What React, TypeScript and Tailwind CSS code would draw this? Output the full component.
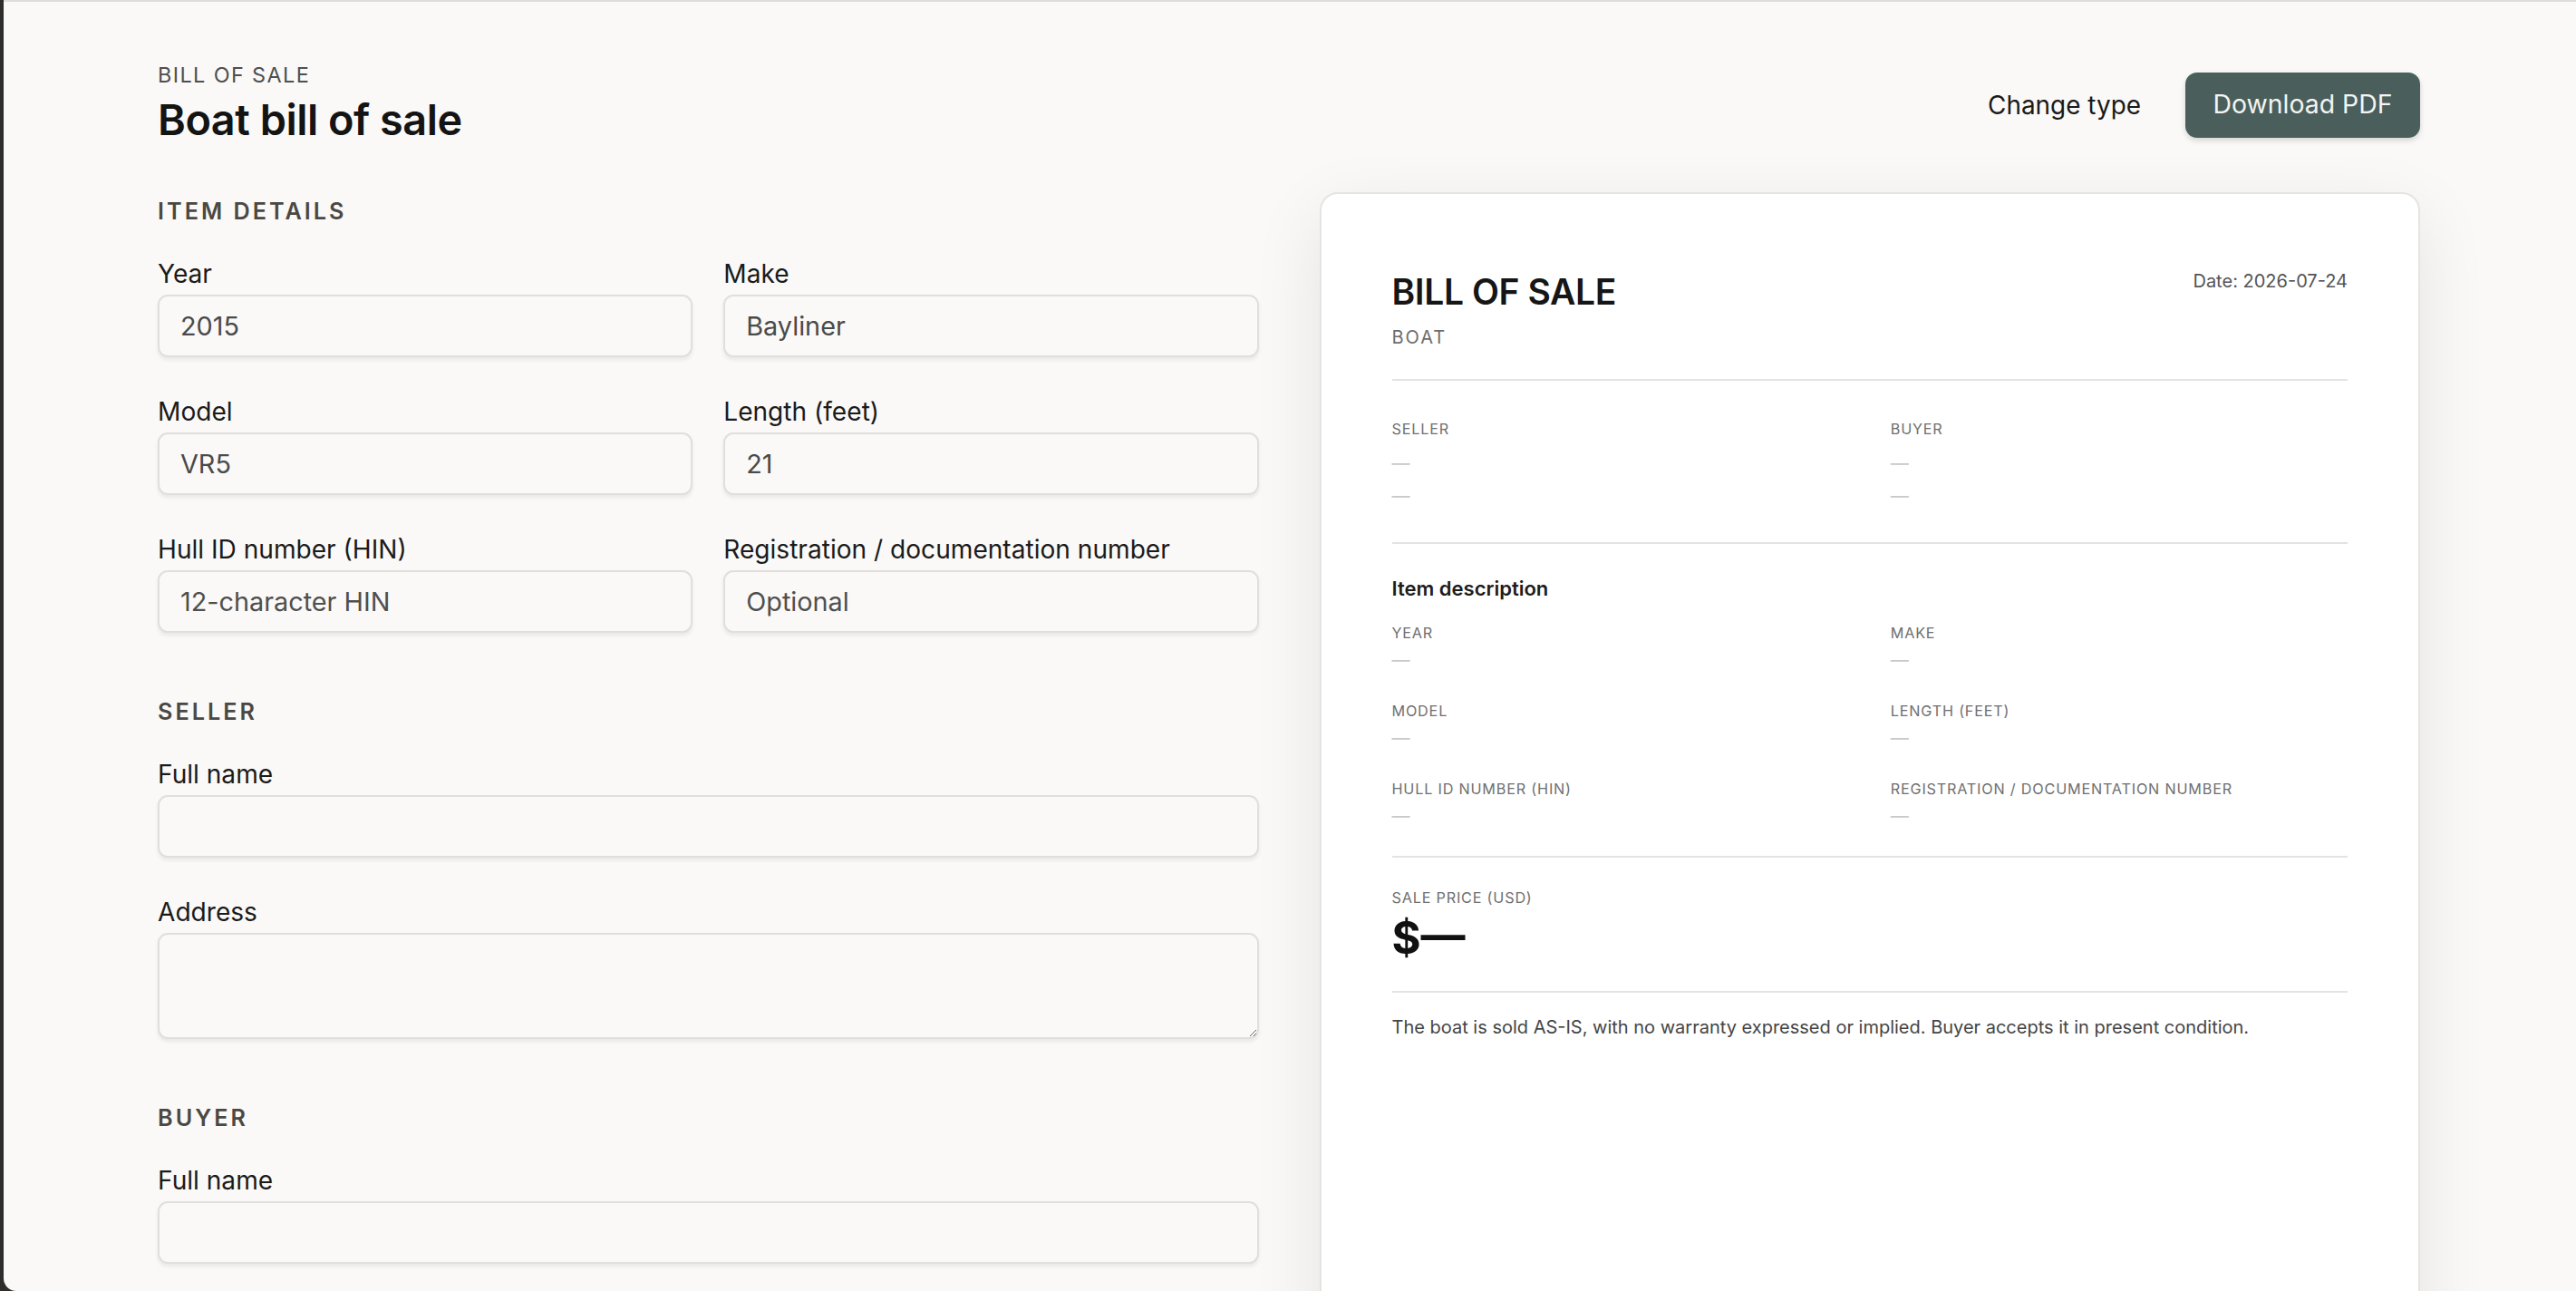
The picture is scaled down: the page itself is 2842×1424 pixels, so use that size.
import React from "react";

type FieldProps = {
  label: string;
  value?: string;
  placeholder?: string;
  textarea?: boolean;
};

const Field = ({ label, value, placeholder, textarea }: FieldProps) => {
  const box =
    "w-full rounded-[11px] border-2 border-[#e1dfdc] bg-[#faf9f7] px-[23px] text-[28.8px] text-[#4a4a4a] placeholder:text-[#4f4f4f] shadow-[0_3px_4px_rgba(0,0,0,0.07)] outline-none";
  return (
    <label className="flex flex-col">
      <span className="text-[28.1px] leading-[34px] text-[#1b1b1b]">{label}</span>
      {textarea ? (
        <textarea className={`${box} mt-[6px] h-[117px] py-[14px]`} defaultValue={value} placeholder={placeholder} />
      ) : (
        <input className={`${box} mt-[6px] h-[69px]`} defaultValue={value} placeholder={placeholder} />
      )}
    </label>
  );
};

const Section = ({ title, children, first }: { title: string; children: React.ReactNode; first?: boolean }) => (
  <section className={first ? "" : "mt-[70px]"}>
    <h2 className="text-[25.2px] leading-[34px] font-semibold uppercase tracking-[0.12em] text-[#4b4843]">{title}</h2>
    <div className="mt-[35px]">{children}</div>
  </section>
);

const SmallLabel = ({ children }: { children: React.ReactNode }) => (
  <div className="text-[16.2px] leading-[22px] uppercase tracking-[0.05em] text-[#6f6f6f]">{children}</div>
);

const Dash = ({ tall }: { tall?: boolean }) => (
  <div className={tall ? "text-[20px] leading-[36px] text-[#c9c9c9]" : "text-[20px] leading-[30px] text-[#c9c9c9]"}>—</div>
);

const Divider = () => <div className="h-[2px] bg-[#e3e3e3]" />;

const Preview = () => {
  const items = [
    ["Year", "Make"],
    ["Model", "Length (feet)"],
    ["Hull ID number (HIN)", "Registration / documentation number"],
  ];
  return (
    <div className="aspect-[8.5/11] rounded-[20px] border-2 border-[#e6e4e1] bg-white pl-[78px] pr-[78px] pt-[86px] shadow-[0_24px_80px_rgba(0,0,0,0.09)]">
      <div className="flex items-start justify-between">
        <div>
          <div className="text-[39px] leading-[44px] font-semibold tracking-[-0.01em] text-[#161616]">BILL OF SALE</div>
          <div className="mt-[14px] text-[20px] leading-[28px] tracking-[0.1em] text-[#6d6d6d]">BOAT</div>
        </div>
        <div className="text-[20px] leading-[20px] text-[#555]">Date: 2026-07-24</div>
      </div>
      <div className="mt-[32px]">
        <Divider />
      </div>
      <div className="grid grid-cols-2 gap-x-[46px] pt-[42px]">
        {["Seller", "Buyer"].map((p) => (
          <div key={p}>
            <SmallLabel>{p}</SmallLabel>
            <div className="mt-[9px]">
              <Dash tall />
              <Dash tall />
            </div>
          </div>
        ))}
      </div>
      <div className="mt-[33px]">
        <Divider />
      </div>
      <div className="pt-[33px]">
        <div className="text-[22px] leading-[32px] font-semibold text-[#1d1d1d]">Item description</div>
        <div className="mt-[22px] grid grid-cols-2 gap-x-[46px] gap-y-[30px]">
          {items.flat().map((t) => (
            <div key={t}>
              <SmallLabel>{t}</SmallLabel>
              <div className="mt-[4px]">
                <Dash />
              </div>
            </div>
          ))}
        </div>
      </div>
      <div className="mt-[29px]">
        <Divider />
      </div>
      <div className="pt-[33px]">
        <SmallLabel>Sale price (USD)</SmallLabel>
        <div className="mt-[6px] text-[49px] leading-[56px] font-bold text-[#111]">$—</div>
      </div>
      <div className="mt-[30px]">
        <Divider />
      </div>
      <p className="mt-[24px] text-[20px] leading-[28px] text-[#454545]">
        The boat is sold AS-IS, with no warranty expressed or implied. Buyer accepts it in present condition.
      </p>
    </div>
  );
};

export default function App() {
  return (
    <div className="h-screen overflow-hidden bg-[#2d2d2d] pl-[4px] font-[family-name:Inter,'Noto_Sans',sans-serif]">
      <div className="h-full overflow-hidden rounded-bl-[14px] border-t-2 border-[#dddddd] bg-[#faf9f7]">
        <div className="pl-[170px] pr-[172px] pt-[66px]">
          <header className="flex items-center justify-between">
            <div>
              <div className="text-[23.4px] leading-[30px] tracking-[0.06em] text-[#4f4f4f]">BILL OF SALE</div>
              <h1 className="mt-[7px] text-[46.8px] leading-[54px] font-semibold tracking-[-0.01em] text-[#141414]">
                Boat bill of sale
              </h1>
            </div>
            <div className="flex items-center gap-[20px] pt-[4px]">
              <button className="px-[29px] text-[27.9px] leading-[72px] font-normal text-[#1a1a1a]">Change type</button>
              <button className="h-[72px] w-[259px] rounded-[13px] bg-[#4a5f5b] text-[28.4px] font-normal text-[#f4f4f2] shadow-[0_3px_6px_rgba(0,0,0,0.15)]">
                Download PDF
              </button>
            </div>
          </header>

          <div className="mt-[53px] grid grid-cols-2 gap-x-[67px]">
            <div className="pt-[4px]">
              <Section title="Item details" first>
                <div className="grid grid-cols-2 gap-x-[34px] gap-y-[43px]">
                  <Field label="Year" value="2015" />
                  <Field label="Make" value="Bayliner" />
                  <Field label="Model" value="VR5" />
                  <Field label="Length (feet)" value="21" />
                  <Field label="Hull ID number (HIN)" placeholder="12-character HIN" />
                  <Field label="Registration / documentation number" placeholder="Optional" />
                </div>
              </Section>
              <Section title="Seller">
                <div className="flex flex-col gap-[43px]">
                  <Field label="Full name" />
                  <Field label="Address" textarea />
                </div>
              </Section>
              <Section title="Buyer">
                <div className="flex flex-col gap-[43px]">
                  <Field label="Full name" />
                  <Field label="Address" textarea />
                </div>
              </Section>
            </div>
            <div>
              <Preview />
            </div>
          </div>
        </div>
      </div>
    </div>
  );
}
